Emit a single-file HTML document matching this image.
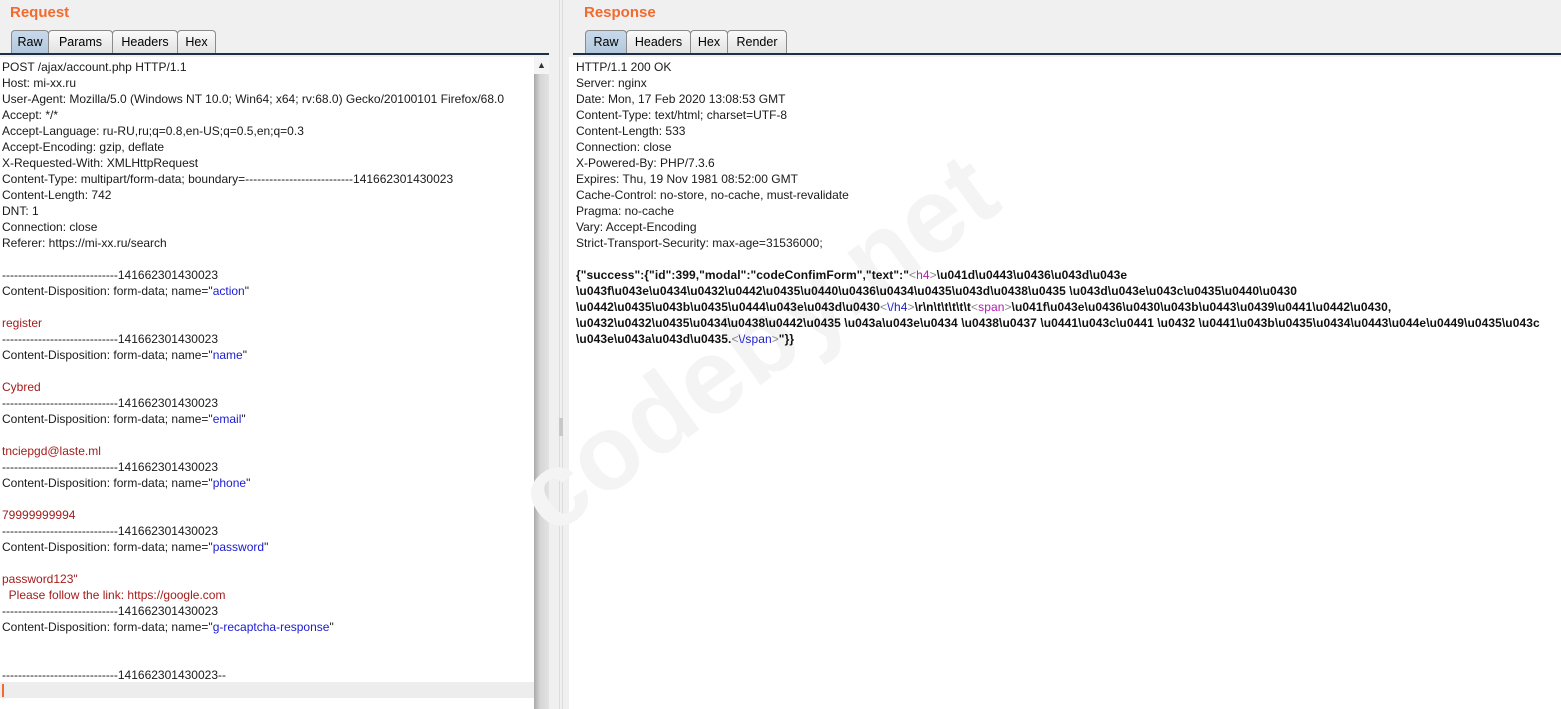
<!DOCTYPE html>
<html><head><meta charset="utf-8"><style>
body{margin:0;width:1561px;height:709px;background:#f0f0f0;font-family:"Liberation Sans",Arial,sans-serif;overflow:hidden;position:relative}
.title{position:absolute;top:4px;font-size:15px;font-weight:bold;color:#f26a2d}
.tabs{position:absolute;top:30px;height:23px;display:flex}
.tab{box-sizing:border-box;height:23px;border:1px solid #8a8a8a;border-bottom:none;border-radius:4px 4px 0 0;background:linear-gradient(#fafafa,#e2e2e2);font-size:12.5px;line-height:23px;text-align:center;color:#000;margin-right:-1px}
.tab.sel{background:linear-gradient(#c9d9ea,#b2c8de)}
.bar{position:absolute;top:53px;height:2px;background:#1f2f45}
.area{position:absolute;top:57px;background:#fff;bottom:0}
.txt{position:absolute;top:59px;font-size:12px;line-height:16px;color:#1a1a1a;white-space:pre}
.r{color:#a41c1c}.b{color:#1b1bd0}.m{color:#b21ab2}.g{color:#888}
.json{font-weight:bold;color:#111}
</style></head><body>
<div class="title" style="left:10px">Request</div>
<div class="tabs" style="left:11px"><div class="tab sel" style="width:38px">Raw</div><div class="tab" style="width:65px">Params</div><div class="tab" style="width:66px">Headers</div><div class="tab" style="width:39px">Hex</div></div>
<div class="bar" style="left:0;width:549px"></div>
<div class="area" style="left:0;width:534px"></div>
<div style="position:absolute;left:534px;top:57px;width:15px;bottom:0;background:linear-gradient(90deg,#a9a9a9,#d5d5d5 40%,#e3e3e3)"></div>
<div style="position:absolute;left:534px;top:57px;width:15px;height:17px;background:#f4f4f4;font-size:9px;text-align:center;line-height:17px;color:#333">▲</div>
<div style="position:absolute;left:0;top:682px;width:534px;height:16px;background:#ededed"></div>
<div style="position:absolute;left:2px;top:684px;width:2px;height:13px;background:#f26a2d"></div>
<div style="position:absolute;left:559px;top:0;width:1px;bottom:0;background:#dcdcdc"></div>
<div style="position:absolute;left:562px;top:0;width:1px;bottom:0;background:#dcdcdc"></div>
<div style="position:absolute;left:559px;top:418px;width:4px;height:18px;background:#c8c8c8"></div>
<div class="title" style="left:584px">Response</div>
<div class="tabs" style="left:585px"><div class="tab sel" style="width:42px">Raw</div><div class="tab" style="width:65px">Headers</div><div class="tab" style="width:38px">Hex</div><div class="tab" style="width:60px">Render</div></div>
<div class="bar" style="left:573px;width:988px"></div>
<div class="area" style="left:569px;right:0"></div>
<div style="position:absolute;left:530px;top:455px;font-size:106px;line-height:106px;font-weight:bold;color:#f4f4f4;transform:rotate(-36deg);transform-origin:left center;white-space:nowrap;letter-spacing:1px">codeby.net</div>
<div class="txt" style="left:2px">POST /ajax/account.php HTTP/1.1
Host: mi-xx.ru
User-Agent: Mozilla/5.0 (Windows NT 10.0; Win64; x64; rv:68.0) Gecko/20100101 Firefox/68.0
Accept: */*
Accept-Language: ru-RU,ru;q=0.8,en-US;q=0.5,en;q=0.3
Accept-Encoding: gzip, deflate
X-Requested-With: XMLHttpRequest
Content-Type: multipart/form-data; boundary=---------------------------141662301430023
Content-Length: 742
DNT: 1
Connection: close
Referer: https://mi-xx.ru/search

-----------------------------141662301430023
Content-Disposition: form-data; name="<span class="b">action</span>"

<span class="r">register</span>
-----------------------------141662301430023
Content-Disposition: form-data; name="<span class="b">name</span>"

<span class="r">Cybred</span>
-----------------------------141662301430023
Content-Disposition: form-data; name="<span class="b">email</span>"

<span class="r">tnciepgd@laste.ml</span>
-----------------------------141662301430023
Content-Disposition: form-data; name="<span class="b">phone</span>"

<span class="r">79999999994</span>
-----------------------------141662301430023
Content-Disposition: form-data; name="<span class="b">password</span>"

<span class="r">password123"
  Please follow the link: https://google.com</span>
-----------------------------141662301430023
Content-Disposition: form-data; name="<span class="b">g-recaptcha-response</span>"


-----------------------------141662301430023--</div>
<div class="txt" style="left:576px">HTTP/1.1 200 OK
Server: nginx
Date: Mon, 17 Feb 2020 13:08:53 GMT
Content-Type: text/html; charset=UTF-8
Content-Length: 533
Connection: close
X-Powered-By: PHP/7.3.6
Expires: Thu, 19 Nov 1981 08:52:00 GMT
Cache-Control: no-store, no-cache, must-revalidate
Pragma: no-cache
Vary: Accept-Encoding
Strict-Transport-Security: max-age=31536000;

<span class="json" style="letter-spacing:0.08px">{"success":{"id":399,"modal":"codeConfimForm","text":"<span class="g" style="font-weight:normal">&lt;</span><span class="m" style="font-weight:normal">h4</span><span class="g" style="font-weight:normal">&gt;</span>\u041d\u0443\u0436\u043d\u043e
\u043f\u043e\u0434\u0432\u0442\u0435\u0440\u0436\u0434\u0435\u043d\u0438\u0435 \u043d\u043e\u043c\u0435\u0440\u0430
\u0442\u0435\u043b\u0435\u0444\u043e\u043d\u0430<span class="g" style="font-weight:normal">&lt;</span><span class="b" style="font-weight:normal">\/h4</span><span class="g" style="font-weight:normal">&gt;</span>\r\n\t\t\t\t\t<span class="g" style="font-weight:normal">&lt;</span><span class="m" style="font-weight:normal">span</span><span class="g" style="font-weight:normal">&gt;</span>\u041f\u043e\u0436\u0430\u043b\u0443\u0439\u0441\u0442\u0430,
\u0432\u0432\u0435\u0434\u0438\u0442\u0435 \u043a\u043e\u0434 \u0438\u0437 \u0441\u043c\u0441 \u0432 \u0441\u043b\u0435\u0434\u0443\u044e\u0449\u0435\u043c
\u043e\u043a\u043d\u0435.<span class="g" style="font-weight:normal">&lt;</span><span class="b" style="font-weight:normal">\/span</span><span class="g" style="font-weight:normal">&gt;</span>"}}</span></div>
</body></html>
